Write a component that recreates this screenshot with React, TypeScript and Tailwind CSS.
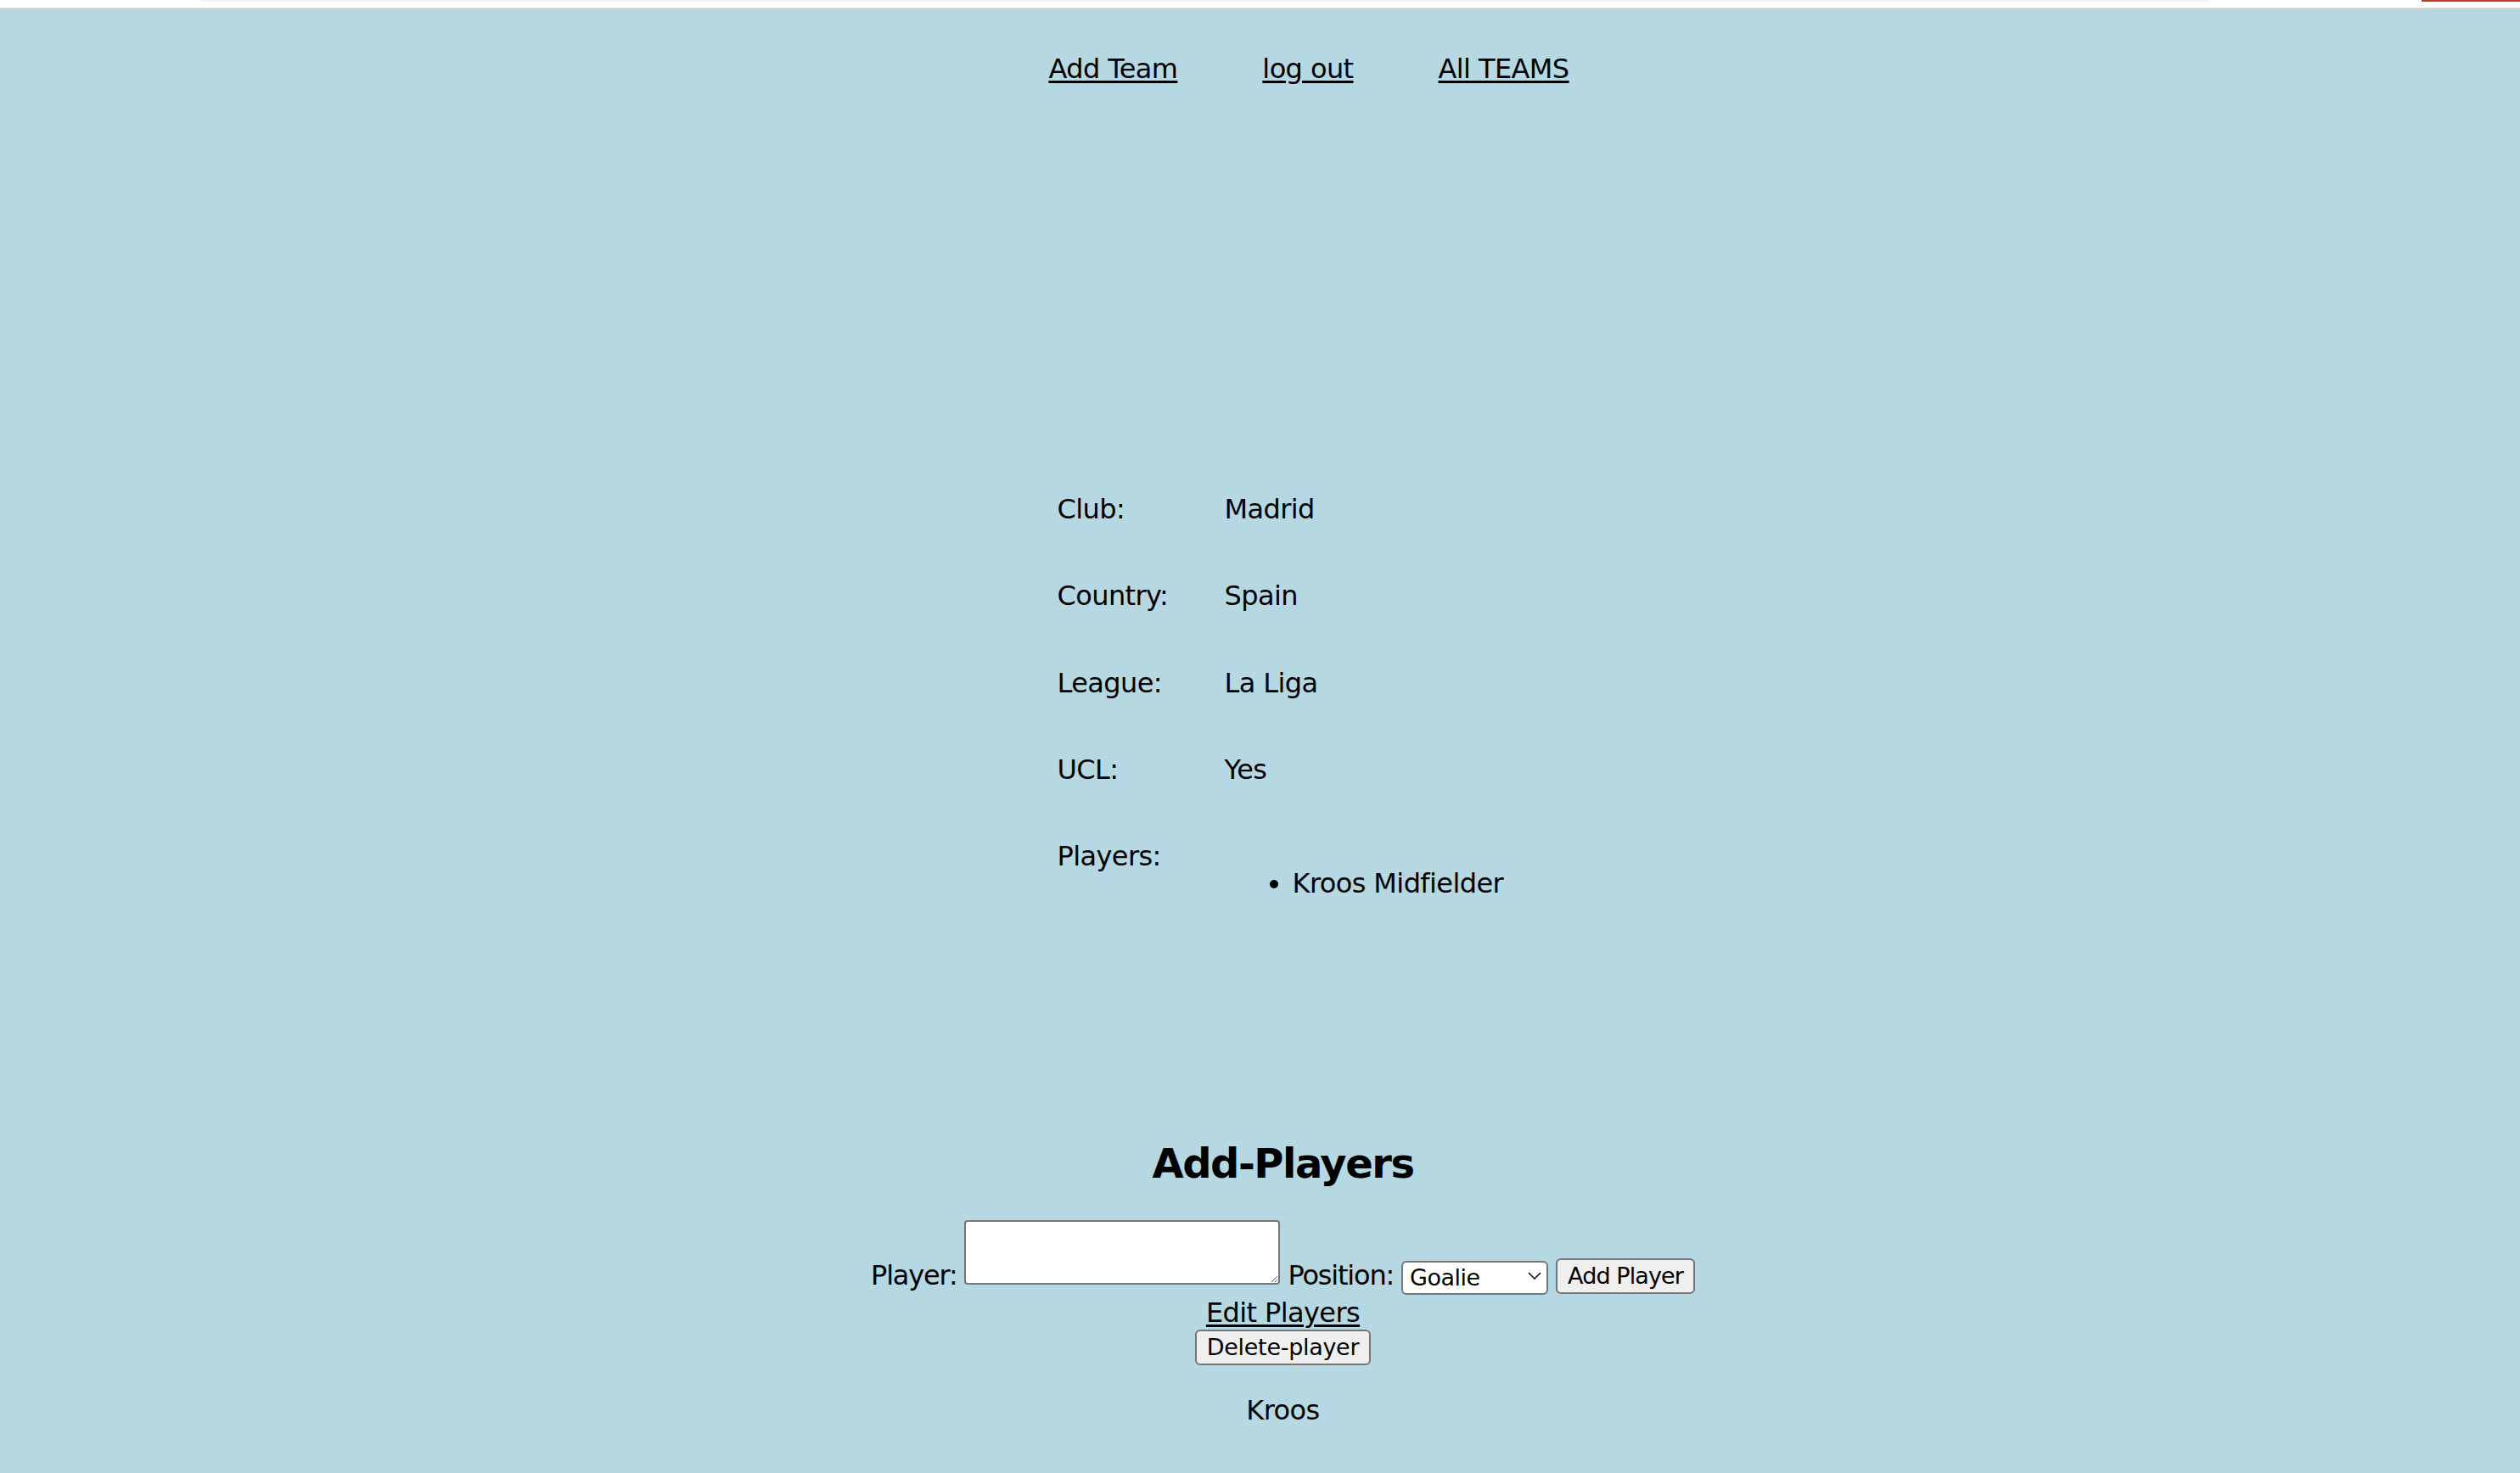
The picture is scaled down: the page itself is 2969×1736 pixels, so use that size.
const font = "font-['DejaVu_Sans','Liberation_Sans',sans-serif]";

const details = [
	{ label: "Club:", value: "Madrid" },
	{ label: "Country:", value: "Spain" },
	{ label: "League:", value: "La Liga" },
	{ label: "UCL:", value: "Yes" }
];

const players = [{ name: "Kroos", position: "Midfielder" }];

function Nav() {
	return (
		<nav className="mt-[50px] flex justify-center gap-[100px] pl-[115px] text-[32px] leading-[40px] tracking-[-0.6px]">
			<a href="#" className="underline decoration-[2.5px] underline-offset-[3px]">
				Add Team
			</a>
			<a href="#" className="underline decoration-[2.5px] underline-offset-[3px]">
				log out
			</a>
			<a href="#" className="underline decoration-[2.5px] underline-offset-[3px]">
				All TEAMS
			</a>
		</nav>
	);
}

function TeamDetails() {
	return (
		<div className="mx-auto mt-[479px] grid w-[532px] grid-cols-[197px_1fr] gap-y-[62.3px] text-[32px] leading-[40px] tracking-[-0.6px]">
			{details.map((row) => (
				<div key={row.label} className="contents">
					<span>{row.label}</span>
					<span>{row.value}</span>
				</div>
			))}
			<span>Players:</span>
			<ul className="mt-[32px] list-disc pl-[80px]">
				{players.map((p) => (
					<li key={p.name}>
						{p.name} {p.position}
					</li>
				))}
			</ul>
		</div>
	);
}

function AddPlayers() {
	return (
		<section className="flex flex-col items-center">
			<h2 className="mt-[282px] text-[48px] font-bold leading-[56px] tracking-[-1.5px]">
				Add-Players
			</h2>
			<form
				className="mt-[39px] flex items-start gap-[9px] text-[32px] leading-[40px] tracking-[-1.2px]"
				onSubmit={(e) => e.preventDefault()}
			>
				<label className="mt-[45px]">Player:</label>
				<textarea className="h-[76px] w-[372px] rounded-[4px] border-2 border-[#767676] bg-white" />
				<label className="mt-[45px]">Position:</label>
				<div className="relative mt-[46px]">
					<select
						defaultValue="Goalie"
						className="h-[40px] w-[173px] appearance-none rounded-[6px] border-2 border-[#767676] bg-white pl-[8px] text-[27px] leading-[36px] tracking-[-0.5px] text-black"
					>
						<option>Goalie</option>
						<option>Defender</option>
						<option>Midfielder</option>
						<option>Forward</option>
					</select>
					<svg
						viewBox="0 0 16 9"
						className="pointer-events-none absolute right-[8px] top-[15px] h-[9px] w-[16px]"
						fill="none"
						stroke="#111"
						strokeWidth="1.6"
						aria-hidden="true"
					>
						<polyline points="1,1 8,8 15,1" />
					</svg>
				</div>
				<button
					type="submit"
					className="mt-[45px] h-[42px] rounded-[6px] border-2 border-[#767676] bg-[#efefef] px-[12px] text-[27px] leading-[36px] tracking-[-0.9px]"
				>
					Add Player
				</button>
			</form>
			<a
				href="#"
				className="mt-[1px] text-[32px] leading-[40px] tracking-[-0.6px] underline decoration-[2.5px] underline-offset-[3px]"
			>
				Edit Players
			</a>
			<button
				type="button"
				className="h-[42px] rounded-[6px] border-2 border-[#767676] bg-[#efefef] px-[12px] text-[27px] leading-[36px] tracking-[-0.3px]"
			>
				Delete-player
			</button>
			<p className="mt-[33px] text-[32px] leading-[40px] tracking-[-0.6px]">Kroos</p>
		</section>
	);
}

export default function App() {
	return (
		<div className={`flex min-h-screen flex-col bg-white text-black ${font}`}>
			<div className="flex h-[9px] items-start">
				<div className="ml-[237px] h-[2px] w-[2365px] bg-[#f3f3f3]" />
				<div className="ml-auto h-[2px] w-[116px] bg-[#c0392b]" />
			</div>
			<div className="h-[2px] bg-[#d5d5d5]" />
			<main className="flex-1 bg-[#b6d8e3]">
				<Nav />
				<div className="pl-[54px]">
					<TeamDetails />
					<AddPlayers />
				</div>
			</main>
		</div>
	);
}
